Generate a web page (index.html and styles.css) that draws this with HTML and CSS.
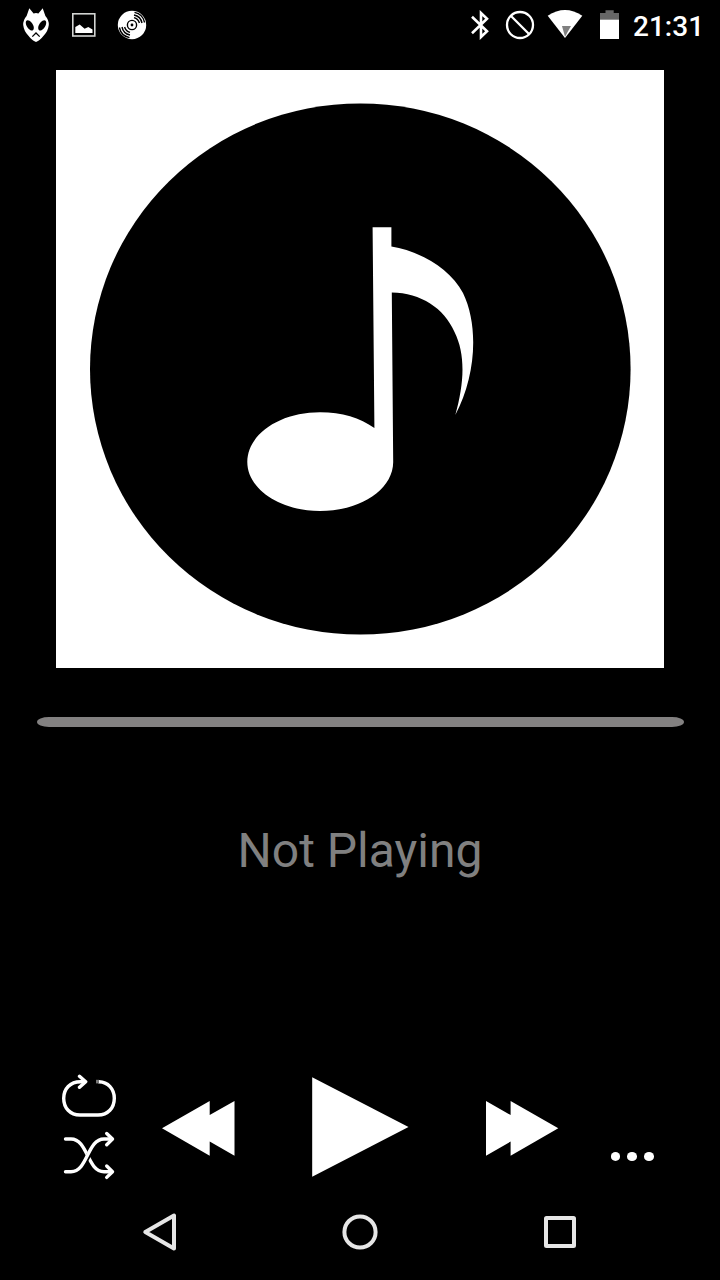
FILE: index.html
```html
<!DOCTYPE html>
<html lang="en">
<head>
  <meta charset="UTF-8" />
  <meta name="viewport" content="width=device-width, initial-scale=1.0" />
  <title>Music Player</title>
  <link rel="stylesheet" href="styles.css">
</head>
<body>
  <header class="status-bar">
    <div class="notifications">
      <svg width="28" height="36" viewBox="22 7 28 36">
        <path fill="#fff" d="M29.3 8.3 L33.6 13.4 Q36 12.8 38.4 13.4 L42.7 8.3 L45.4 16 Q49 20 48.8 25 Q48 31 44.2 35 Q40 40.5 36 42 Q32 40.5 27.8 35 Q24 31 23.2 25 Q23 20 26.6 16 Z"/>
        <ellipse cx="29.8" cy="25.4" rx="3.1" ry="5.8" transform="rotate(-32 29.8 25.4)"/>
        <ellipse cx="42.2" cy="25.4" rx="3.1" ry="5.8" transform="rotate(32 42.2 25.4)"/>
        <path fill="none" stroke="#000" stroke-width="1.3" d="M32.3 36.6 L36 33 L39.7 36.6"/>
      </svg>
      <svg width="24" height="24" viewBox="72 13 24 24">
        <rect x="72.8" y="13.8" width="22" height="22.2" fill="none" stroke="#d2d4d2" stroke-width="1.6"/>
        <path fill="#fff" d="M75.3 33 V27 L79.7 24.5 L84.6 28.8 L88.3 27 L92.5 29.6 V33 Z"/>
      </svg>
      <svg width="30" height="30" viewBox="117 10 30 30">
        <circle cx="132" cy="25" r="14.2" fill="#fff"/>
        <g fill="none" stroke="#000" stroke-width="1.4">
          <circle cx="132" cy="25" r="4.6"/>
          <path d="M134 17.6 A7.7 7.7 0 0 1 139.4 23"/>
          <path d="M134 15 A10.2 10.2 0 0 1 142 23"/>
          <path d="M134.5 12.4 A12.8 12.8 0 0 1 144.6 22.5"/>
          <path d="M130 32.4 A7.7 7.7 0 0 1 124.6 27"/>
          <path d="M130 35 A10.2 10.2 0 0 1 122 27"/>
          <path d="M129.5 37.6 A12.8 12.8 0 0 1 119.4 27.5"/>
        </g>
        <circle cx="132" cy="25" r="1.4"/>
      </svg>
    </div>
    <div class="system-icons">
      <svg width="20" height="30" viewBox="470 10 20 30">
        <path fill="none" stroke="#fff" stroke-width="2.6" d="M472 16.8 L487 31.2 L481 37 V13 L487 18.8 L472 33.2"/>
      </svg>
      <svg width="30" height="30" viewBox="505 10 30 30">
        <circle cx="520" cy="25" r="13" fill="none" stroke="#fff" stroke-width="2.3"/>
        <path stroke="#fff" stroke-width="2.3" d="M511 16 L529 34"/>
      </svg>
      <svg width="36" height="30" viewBox="547 9 36 30">
        <path fill="#fff" d="M547.7 15.7 Q565 4.2 582.3 15.7 L565 38 Z"/>
        <path fill="#808080" d="M562 26 H571 L565 36.8 Z"/>
      </svg>
      <svg width="20" height="30" viewBox="600 10 20 30">
        <path fill="#666" d="M600 13 H605.5 V10.3 H613.7 V13 H619 V20 H600 Z"/>
        <rect x="600" y="19.7" width="19" height="19.3" fill="#fff"/>
      </svg>
      <span class="clock">21:31</span>
    </div>
  </header>

  <main class="player">
    <svg class="cover" width="608" height="598" viewBox="56 70 608 598">
      <ellipse cx="360.3" cy="369" rx="270.3" ry="265.6"/>
      <path fill="#fff" d="M372.6 227.3 H391.4 V246.6 C419 251 450 268 463 293 C479 326 476 376 455.3 415 C464 384 466 355 454.5 332 C444 308 421 293 391.8 292.5 L393.2 462 C393 490 360 511 320 511 C280 511 247.3 489 247.3 462 C247.3 434 280 412.3 320 412.3 C342 412.3 360 418 374.4 428 Z"/>
    </svg>

    <div class="progress"></div>

    <h1 class="track-title">Not Playing</h1>

    <div class="controls">
      <div class="modes">
        <svg width="56" height="44" viewBox="61 1074 56 44">
          <path class="line" d="M84 1081.7 H80.5 C70 1081.7 63.7 1089 63.7 1098.2 C63.7 1108 70 1115 80 1115 H98 C108 1115 114.3 1108 114.3 1098.2 C114.3 1089 108 1082 99 1081.8"/>
          <path class="line" d="M79.5 1076.3 L85.7 1081.7 L79.5 1087.3"/>
          <rect x="96" y="1079.8" width="3" height="3.6" fill="#777"/>
        </svg>
        <svg width="54" height="50" viewBox="62 1130 54 50">
          <path class="line" d="M65.5 1139 H71 C88 1139 87 1171.7 104 1171.7 H111"/>
          <path class="cross" d="M84.5 1162.5 L92.5 1148.5"/>
          <path class="line" d="M65.5 1171.7 H71 C88 1171.7 87 1139 104 1139 H111"/>
          <path class="line" d="M106.7 1133.5 L112.5 1139 L106.7 1144.7 M106.7 1166 L112.5 1171.7 L106.7 1177.4"/>
        </svg>
      </div>
      <svg class="rewind" width="73" height="56" viewBox="162 1101 73 56">
        <path fill="#fff" d="M162 1128.3 L209.7 1101 V1115 L234.5 1101 V1155.7 L209.7 1141.6 V1155.7 Z"/>
      </svg>
      <svg class="play" width="98" height="100" viewBox="311 1077 98 100">
        <path fill="#fff" d="M312.2 1077.2 L408.5 1127 L312.2 1176.8 Z"/>
      </svg>
      <svg class="forward" width="73" height="56" viewBox="486 1101 73 56">
        <path fill="#fff" d="M558.3 1128.3 L510.6 1101 V1115 L486 1101 V1155.7 L510.6 1141.6 V1155.7 Z"/>
      </svg>
      <div class="more">
        <span></span><span></span><span></span>
      </div>
    </div>
  </main>

  <nav class="nav-bar">
    <svg width="40" height="40" viewBox="140 1212 40 40">
      <path d="M145.3 1232 L174 1215.5 V1248.5 Z"/>
    </svg>
    <svg width="40" height="40" viewBox="340 1212 40 40">
      <circle cx="360" cy="1232" r="15.6"/>
    </svg>
    <svg width="40" height="40" viewBox="540 1212 40 40">
      <rect x="546" y="1218" width="28" height="28" rx="0.5"/>
    </svg>
  </nav>
</body>
</html>
```

FILE: styles.css
```css
* {
  box-sizing: border-box;
}

body {
  margin: 0;
  height: 1280px;
  display: flex;
  flex-direction: column;
  background: #000;
  font-family: Roboto, sans-serif;
  overflow: hidden;
}

svg {
  display: block;
  flex: none;
}

.status-bar {
  height: 50px;
  padding: 0 16px 0 22px;
  display: flex;
  align-items: center;
  justify-content: space-between;
}

.notifications {
  display: flex;
  align-items: center;
  gap: 22px;
}

.notifications svg:last-child {
  margin-left: -1px;
}

.system-icons {
  display: flex;
  align-items: center;
  margin-left: auto;
}

.system-icons svg:nth-child(1) {
  margin-right: 15px;
}

.system-icons svg:nth-child(2) {
  margin-right: 12px;
}

.system-icons svg:nth-child(3) {
  margin: -2px 17px 0 0;
}

.clock {
  width: 71px;
  margin-left: 13px;
  color: #fff;
  font-size: 28px;
  font-weight: 500;
  line-height: 50px;
  padding-top: 4px;
  white-space: nowrap;
}

.player {
  height: 1134px;
  display: flex;
  flex-direction: column;
}

.cover {
  margin: 20px auto 0;
  background: #fff;
}

.progress {
  height: 10px;
  margin: 49px 36px 0 37px;
  background: #838181;
  border-radius: 12px / 5px;
}

.track-title {
  margin: 94px 0 0;
  color: #808080;
  font-size: 48px;
  font-weight: 400;
  line-height: 60px;
  text-align: center;
}

.controls {
  display: flex;
  align-items: flex-start;
  height: 110px;
  margin: auto 0 0;
  padding-left: 61px;
}

.modes {
  display: flex;
  flex-direction: column;
  gap: 12px;
}

.modes svg:last-child {
  margin-left: 1px;
}

.line {
  fill: none;
  stroke: #fff;
  stroke-width: 3.4;
  stroke-linecap: round;
  stroke-linejoin: round;
}

.cross {
  stroke: #000;
  stroke-width: 5;
}

.rewind {
  margin: 27px 0 0 45px;
}

.play {
  margin: 3px 0 0 76px;
}

.forward {
  margin: 27px 0 0 77px;
}

.more {
  display: flex;
  gap: 7px;
  margin: 78px 0 0 51.5px;
}

.more span {
  width: 9.7px;
  height: 8.5px;
  border-radius: 50%;
  background: #fff;
}

.nav-bar {
  height: 96px;
  padding: 28px 140px 0;
  display: flex;
  justify-content: space-between;
}

.nav-bar svg {
  fill: none;
  stroke: #e6e6e6;
  stroke-width: 4;
  stroke-linejoin: round;
}
```
